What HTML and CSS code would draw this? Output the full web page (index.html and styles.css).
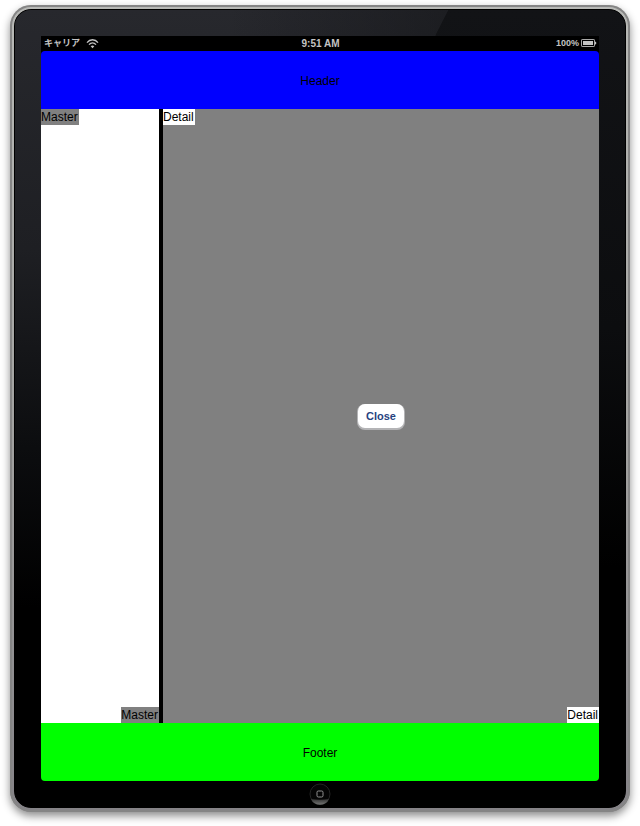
FILE: index.html
```
<!DOCTYPE html>
<html lang="en">
<head>
<meta charset="utf-8">
<meta name="viewport" content="width=device-width, initial-scale=1">
<title>Master Detail</title>
<link rel="stylesheet" href="styles.css">
</head>
<body>
<div class="device">
  <div class="bezel">
    <div class="screen">
      <div class="status">
        <div class="carrier">
          <span lang="ja">キャリア</span>
          <svg class="wifi" width="13" height="10" viewBox="0 0 13 10" fill="none" stroke="currentColor" stroke-width="1.3" aria-hidden="true">
            <path d="M1 3.6C4-.2 9-.2 12 3.6M3 5.6C5 3.2 8 3.2 10 5.6"/>
            <path d="M6.500 9.200 4.700 7.200Q6.500 5.700 8.300 7.200Z" fill="currentColor" stroke="none"/>
          </svg>
        </div>
        <time>9:51 AM</time>
        <div class="power">
          <span>100%</span>
          <svg width="16" height="9" viewBox="0 0 16 9" aria-hidden="true">
            <rect x=".5" y=".5" width="13" height="7" rx=".6" fill="none" stroke="#a8a8a8"/>
            <rect x="2" y="2" width="10" height="4" fill="#c4c4c4"/>
            <path d="M14 2.500q1.300 0 1.300 1.500t-1.300 1.500z" fill="#c4c4c4"/>
          </svg>
        </div>
      </div>
      <header class="bar header">Header</header>
      <main class="split">
        <section class="pane master">
          <span class="tag">Master</span>
          <span class="tag end">Master</span>
        </section>
        <section class="pane detail">
          <span class="tag">Detail</span>
          <button class="close" type="button">Close</button>
          <span class="tag end">Detail</span>
        </section>
      </main>
      <footer class="bar footer">Footer</footer>
    </div>
    <div class="chin">
      <button class="home" type="button" aria-label="Home">
        <svg width="22" height="22" viewBox="0 0 22 22" aria-hidden="true">
          <defs>
            <linearGradient id="shine" x1="0" y1="0" x2="0" y2="1">
              <stop offset="0" stop-color="#333"/>
              <stop offset="1" stop-color="#747474"/>
            </linearGradient>
          </defs>
          <circle cx="11" cy="11" r="10" fill="#050505" stroke="#242424"/>
          <path d="M1.800 16Q11 17.500 20.200 16A10.200 10.200 0 0 1 1.800 16Z" fill="url(#shine)"/>
          <rect x="8" y="8" width="6" height="6" rx="1.300" fill="none" stroke="#929292"/>
        </svg>
      </button>
    </div>
  </div>
</div>
</body>
</html>
```
FILE: styles.css
```
* {
  box-sizing: border-box;
}

body {
  margin: 0;
  min-height: 100vh;
  display: flex;
  padding: 5px 10px 14px;
  background: #fff;
  color: #000;
  font: 12px/15px "Liberation Sans", "Noto Sans CJK JP", sans-serif;
}

.device {
  flex: 1;
  display: flex;
  padding: 4px;
  border-radius: 21px;
  background: linear-gradient(#b8b9b6, #a4a4a2 50%, #858387);
  box-shadow: inset 0 0 0 2px #858585, 0 4px 8px rgba(0, 0, 0, 0.45);
}

.bezel {
  position: relative;
  flex: 1;
  display: flex;
  flex-direction: column;
  padding: 26px 26px 0;
  border: 1px solid #000;
  border-radius: 17px;
  overflow: hidden;
  background: linear-gradient(#121316, #0c0d0f 40%, #000 70%);
}

/* Glass reflection over the left part of the frame */
.bezel::before {
  content: "";
  position: absolute;
  inset: 0;
  background:
    linear-gradient(90deg, transparent 35%, rgba(18, 19, 22, 0.5) 71%),
    linear-gradient(#27282d, #1e1f23 30%, #0c0d0f 55%, #000 75%);
  clip-path: polygon(0 0, 71% 0, 69% 3%, 28% 100%, 0 100%);
}

.screen {
  position: relative;
  flex: 1;
  display: flex;
  flex-direction: column;
  background: #000;
  border-radius: 0 0 4px 4px;
  overflow: hidden;
}

.status {
  display: grid;
  grid-template-columns: 1fr auto 1fr;
  align-items: center;
  height: 15px;
  padding: 0 2px 0 3px;
  color: #c4c4c4;
  font-size: 10px;
  font-weight: bold;
}

.carrier,
.power {
  display: flex;
  align-items: center;
  font-size: 9px;
}

.carrier {
  gap: 6px;
}

.power {
  justify-content: flex-end;
  gap: 2px;
}

.bar {
  display: flex;
  align-items: center;
  justify-content: center;
  height: 58px;
  padding-top: 2px;
}

.header {
  background: #00f;
  border-radius: 4px 4px 0 0;
}

.footer {
  background: #0f0;
}

.split {
  flex: 1;
  display: grid;
  grid-template-columns: 118fr 436fr;
  gap: 4px;
}

.pane {
  display: flex;
  flex-direction: column;
  justify-content: space-between;
  align-items: flex-start;
}

.master,
.detail .tag {
  background: #fff;
}

.detail,
.master .tag {
  background: #808080;
}

.tag {
  padding: 1px 1px 0 0;
}

.tag.end {
  align-self: flex-end;
}

.close {
  align-self: center;
  padding: 5px 8px;
  border: 0;
  border-radius: 7px;
  background: #fff;
  box-shadow: 0 1px 0 1px #b4b4b6;
  color: #27437f;
  font: bold 11px/14px "Liberation Sans", sans-serif;
}

.chin {
  position: relative;
  display: flex;
  justify-content: center;
  align-items: center;
  height: 26px;
}

.home {
  display: flex;
  padding: 0;
  border: 0;
  border-radius: 50%;
  background: none;
}
```
